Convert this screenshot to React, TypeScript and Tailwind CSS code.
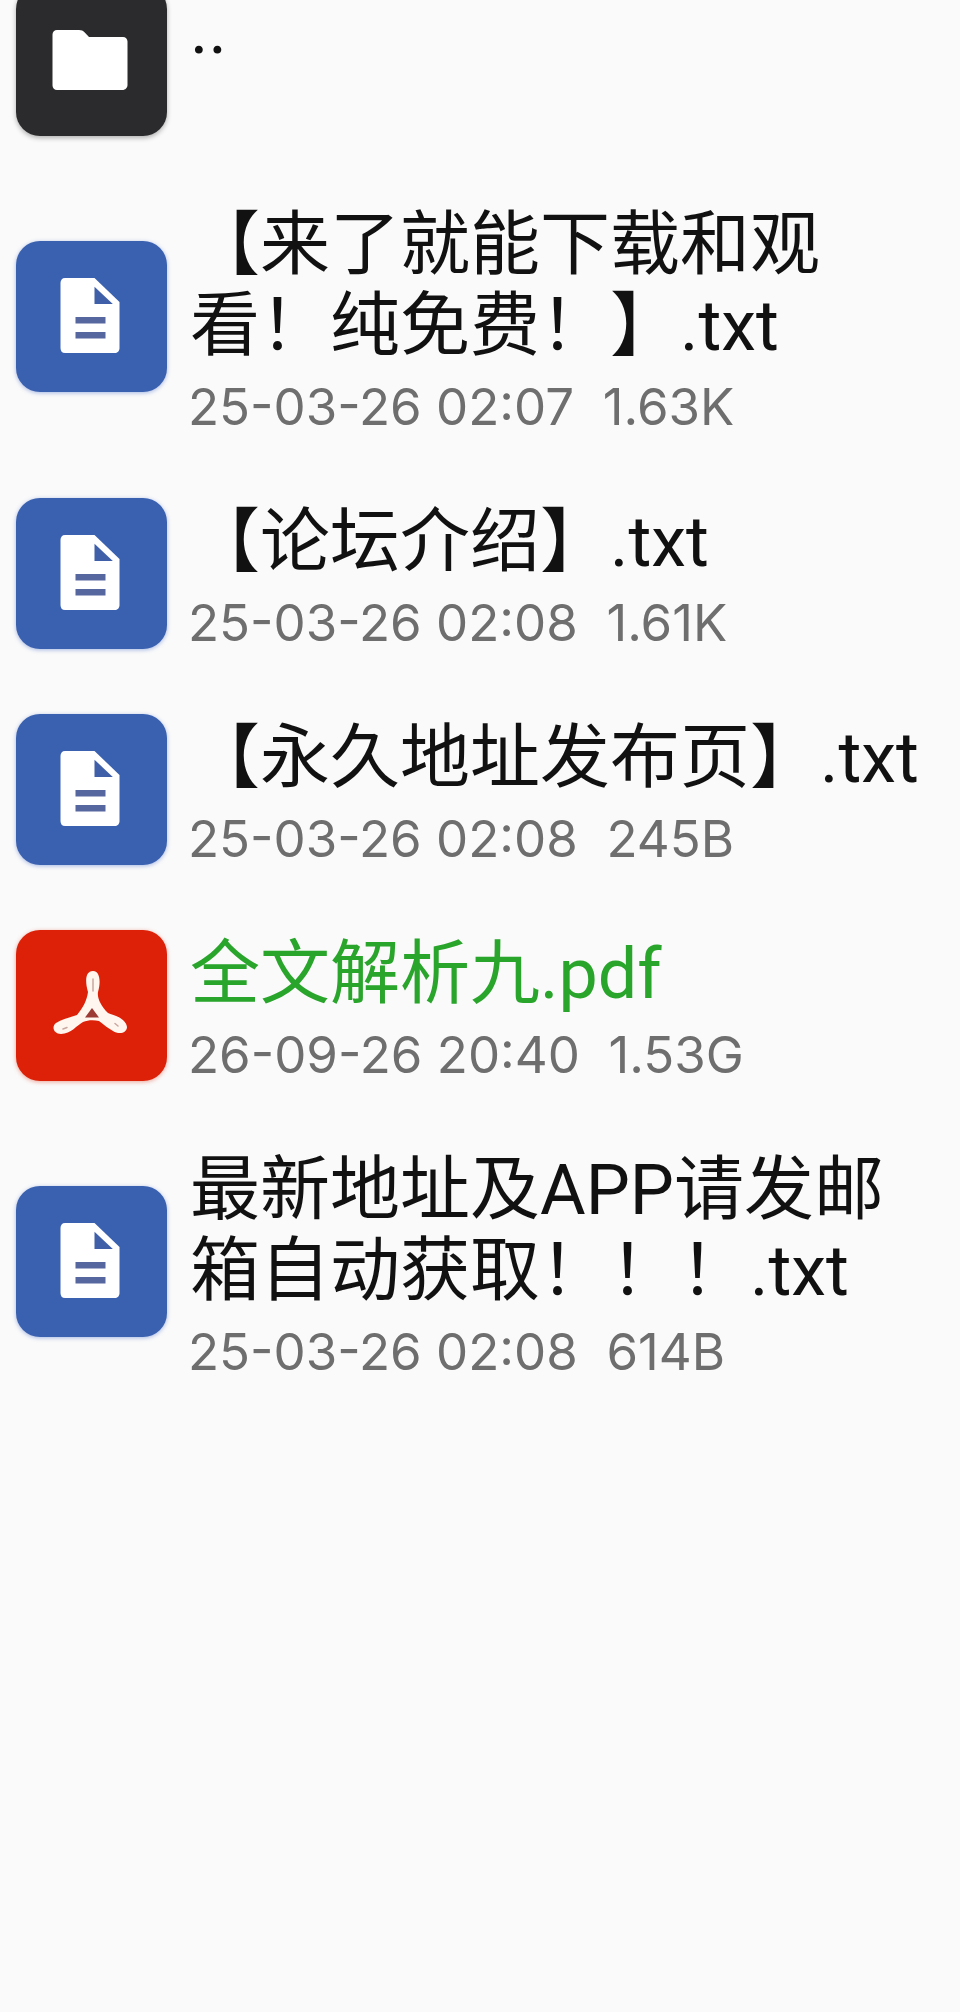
import React from "react";

const FONT = "font-['Roboto','Noto_Sans_CJK_SC',sans-serif]";

function FolderGlyph() {
  return (
    <svg viewBox="0 0 151 151" className="h-full w-full">
      <path d="M41 45h22c2.500 0 4 .8 5.500 2.300L73 52h34c2.500 0 4.500 2 4.500 4.500V100c0 2.800-2.200 5-5 5H41c-2.500 0-4.500-2-4.500-4.500V49.500c0-2.500 2-4.500 4.500-4.500z" fill="#ffffff" />
    </svg>
  );
}

function DocGlyph() {
  return (
    <svg viewBox="0 0 151 151" className="h-full w-full">
      <path d="M49 37h29.500l25 24v46c0 3-2 5-5 5H49c-3 0-4.500-2-4.500-5V42c0-3 1.500-5 4.500-5z" fill="#ffffff" />
      <path d="M78.500 45.700L96.800 63H78.500z" fill="#3f5fa8" />
      <rect x="59.500" y="76" width="30" height="6.500" fill="#56679f" />
      <rect x="59.500" y="91" width="30" height="6.500" fill="#56679f" />
    </svg>
  );
}

function PdfGlyph() {
  return (
    <svg viewBox="0 0 151 151" className="h-full w-full">
      <path
        d="M77 41C84 41 85 52 82 62C81 68 85 76 92 83C97 85 110 88 111 97C111 103 103 105 97 101C92 98 88 95 83 91C78 90 72 90 67 92C61 95 55 104 45 104C38 104 35 97 40 93C46 89 53 88 61 85C67 78 71 70 72 62C69 52 69 41 77 41z"
        fill="#fff6f0"
      />
      <path d="M76 78l7 9.500H69z" fill="#9c3a36" />
      <path d="M77 49v12M47 99l4-1.500M99 93.500l3 2.500" fill="none" stroke="#c9a8a0" strokeWidth="1.500" strokeLinecap="round" />
    </svg>
  );
}

type Kind = "folder" | "doc" | "pdf";

function FileIcon({ kind }: { kind: Kind }) {
  if (kind === "folder") {
    return (
      <div className="h-[151px] w-[151px] shrink-0 rounded-[24px] bg-[#2b2b2d] shadow-[0_2px_5px_rgba(0,0,0,0.3)]">
        <FolderGlyph />
      </div>
    );
  }
  if (kind === "pdf") {
    return (
      <div className="h-[151px] w-[151px] shrink-0 rounded-[24px] bg-[#dc2108] shadow-[0_1px_4px_rgba(220,60,30,0.45)]">
        <PdfGlyph />
      </div>
    );
  }
  return (
    <div className="h-[151px] w-[151px] shrink-0 rounded-[24px] bg-[#3a60b0] shadow-[0_1px_4px_rgba(60,100,200,0.45)]">
      <DocGlyph />
    </div>
  );
}

function Row({
  kind,
  title,
  meta,
  green,
}: {
  kind: Kind;
  title: string;
  meta?: string;
  green?: boolean;
}) {
  return (
    <div className="flex items-center gap-[23px] py-[28px] pl-[16px] pr-[20px]">
      <FileIcon kind={kind} />
      <div className="min-w-0 flex-1 pt-[9px]">
        <div
          className={
            green
              ? "text-[70px] leading-[81px] text-[#2aa52c]"
              : "text-[70px] leading-[81px] text-[#111111]"
          }
        >
          {title}
        </div>
        <div className="-ml-[2px] mt-[9px] h-[61px] whitespace-pre font-['Inter','Noto_Sans_CJK_SC',sans-serif] text-[51px] leading-[61px] text-[#6e6e6e]">
          {meta ?? ""}
        </div>
      </div>
    </div>
  );
}

export default function App() {
  return (
    <div className={`h-[2012px] w-[960px] overflow-hidden bg-[#fafafa] ${FONT}`}>
      <div className="-mt-[48px] flex flex-col">
        <Row kind="folder" title=".." />
        <Row kind="doc" title="【来了就能下载和观看！纯免费！】.txt" meta="25-03-26 02:07  1.63K" />
        <Row kind="doc" title="【论坛介绍】.txt" meta="25-03-26 02:08  1.61K" />
        <Row kind="doc" title="【永久地址发布页】.txt" meta="25-03-26 02:08  245B" />
        <Row kind="pdf" title="全文解析九.pdf" meta="26-09-26 20:40  1.53G" green />
        <Row kind="doc" title="最新地址及APP请发邮箱自动获取！！！.txt" meta="25-03-26 02:08  614B" />
      </div>
    </div>
  );
}
